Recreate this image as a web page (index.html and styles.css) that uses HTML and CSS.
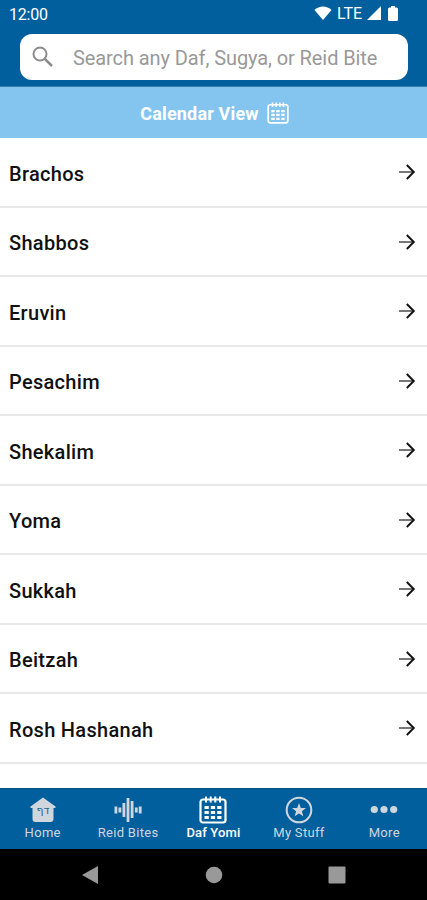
FILE: index.html
```html
<!DOCTYPE html>
<html lang="en">
<head>
  <meta charset="utf-8">
  <meta name="viewport" content="width=device-width, initial-scale=1">
  <title>Daf Yomi</title>
  <link rel="stylesheet" href="styles.css">
</head>
<body>
  <svg class="sprite" width="0" height="0">
    <symbol id="arrow" viewBox="0 0 18 18">
      <path d="M1 9h14" stroke="#777" stroke-width="2"/>
      <path d="M8.800 2l7 7-7 7" fill="none" stroke="#111" stroke-width="1.900"/>
    </symbol>
    <symbol id="calendar" viewBox="0 0 28 28">
      <rect x="1.500" y="3.500" width="25" height="23" rx="2.500" fill="none" stroke="currentColor" stroke-width="2.200"/>
      <path d="M7 .5v6M11.700 .5v6M16.300 .5v6M21 .5v6" stroke="currentColor" stroke-width="2"/>
      <path d="M5.500 11.500h4.300M11.800 11.500h4.300M18.200 11.500h4.300M5.500 16.500h4.300M11.800 16.500h4.300M18.200 16.500h4.300M5.500 21.500h4.300M11.800 21.500h4.300M18.200 21.500h4.300" stroke="currentColor" stroke-width="2.800"/>
    </symbol>
  </svg>
  <div class="app">
    <header class="header">
      <div class="status">
        <span>12:00</span>
        <div class="status-icons">
          <svg width="18" height="14" viewBox="0 0 18 14"><path d="M.5 4C5-.8 13-.8 17.500 4L9 14z" fill="#fff"/></svg>
          <span class="network">LTE</span>
          <svg class="signal" width="14" height="14" viewBox="0 0 14 14"><path d="M14 0v14H0z" fill="#fff"/></svg>
          <svg class="battery" width="10" height="15" viewBox="0 0 10 15"><path d="M3 0h4v1.500h1.500Q10 1.500 10 3v10.500q0 1.500-1.500 1.500h-7Q0 15 0 13.500V3q0-1.500 1.500-1.500H3z" fill="#fff"/></svg>
        </div>
      </div>
      <div class="search">
        <svg width="22" height="22" viewBox="0 0 22 22" fill="none" stroke="#8c8c8c"><circle cx="8" cy="8" r="6.500" stroke-width="2"/><path d="M12.800 12.800l7.200 7.200" stroke-width="2.500"/></svg>
        <span>Search any Daf, Sugya, or Reid Bite</span>
      </div>
    </header>
    <div class="calendar-bar">
      <span>Calendar View</span>
      <svg width="22" height="22"><use href="#calendar"/></svg>
    </div>
    <ul class="list">
      <li><span>Brachos</span><svg width="18" height="18"><use href="#arrow"/></svg></li>
      <li><span>Shabbos</span><svg width="18" height="18"><use href="#arrow"/></svg></li>
      <li><span>Eruvin</span><svg width="18" height="18"><use href="#arrow"/></svg></li>
      <li><span>Pesachim</span><svg width="18" height="18"><use href="#arrow"/></svg></li>
      <li><span>Shekalim</span><svg width="18" height="18"><use href="#arrow"/></svg></li>
      <li><span>Yoma</span><svg width="18" height="18"><use href="#arrow"/></svg></li>
      <li><span>Sukkah</span><svg width="18" height="18"><use href="#arrow"/></svg></li>
      <li><span>Beitzah</span><svg width="18" height="18"><use href="#arrow"/></svg></li>
      <li><span>Rosh Hashanah</span><svg width="18" height="18"><use href="#arrow"/></svg></li>
    </ul>
    <nav class="tabs">
      <div class="tab">
        <svg width="28" height="28" viewBox="0 0 28 28">
          <path d="M14 1.500L26.500 10.500q.8 1.500-1 1.500H24.500V23q0 3-3 3h-15q-3 0-3-3V12H2.500Q.7 12 1.500 10.500z" fill="currentColor"/>
          <text class="logo" x="14" y="18" text-anchor="middle">דף</text>
        </svg>
        <span>Home</span>
      </div>
      <div class="tab">
        <svg width="28" height="28" viewBox="0 0 28 28" stroke="currentColor" stroke-width="2.800">
          <path d="M1.900 10.500v7M5.900 11.500v5M9.900 7v14M14 2v24M18.100 5v17M22.300 11.500v5M26.200 10.500v7"/>
        </svg>
        <span>Reid Bites</span>
      </div>
      <div class="tab active">
        <svg width="28" height="28"><use href="#calendar"/></svg>
        <span>Daf Yomi</span>
      </div>
      <div class="tab">
        <svg width="28" height="28" viewBox="0 0 28 28">
          <circle cx="14" cy="14" r="12.300" fill="none" stroke="currentColor" stroke-width="2"/>
          <path d="M14 7l1.800 4.900 5.200.2-4.100 3.200 1.400 5-4.300-2.900-4.300 2.900 1.400-5L7 12.100l5.200-.2z" fill="currentColor"/>
        </svg>
        <span>My Stuff</span>
      </div>
      <div class="tab">
        <svg width="28" height="28" viewBox="0 0 28 28" fill="currentColor">
          <circle cx="4.300" cy="13.500" r="3.600"/><circle cx="14" cy="13.500" r="3.600"/><circle cx="23.700" cy="13.500" r="3.600"/>
        </svg>
        <span>More</span>
      </div>
    </nav>
    <div class="system">
      <svg width="18" height="20" viewBox="0 0 18 20"><path d="M17 1v18L1 10z" fill="#999"/></svg>
      <svg width="18" height="18" viewBox="0 0 18 18"><circle cx="9" cy="9" r="8.300" fill="#999"/></svg>
      <svg width="18" height="18" viewBox="0 0 18 18"><rect x=".5" y=".5" width="17" height="17" rx="1" fill="#999"/></svg>
    </div>
  </div>
</body>
</html>
```
FILE: styles.css
```css
* {
  box-sizing: border-box;
}
body {
  margin: 0;
  font-family: Roboto, "Liberation Sans", sans-serif;
  background-color: #fff;
}
.sprite {
  display: block;
}
.app {
  height: 900px;
  display: flex;
  flex-direction: column;
  overflow: hidden;
}
.header {
  height: 87px;
  padding: 0 19px 0 20px;
  background-color: #015f9d;
  border-bottom: 1px solid #347fae;
}
.status {
  height: 34px;
  margin: 0 -9px 0 -11px;
  padding-top: 6px;
  display: flex;
  justify-content: space-between;
  color: #fff;
  font-size: 16px;
  line-height: 17px;
  letter-spacing: -0.2px;
}
.status-icons {
  display: flex;
  width: 103px;
}
.network {
  width: 26px;
  margin: -1px 0 0 5px;
  letter-spacing: 0;
}
.signal {
  margin-left: 4px;
}
.battery {
  margin-left: 7px;
}
.search {
  height: 46px;
  padding: 1px 0 0 12px;
  display: flex;
  align-items: center;
  gap: 19px;
  border-radius: 12px;
  background-color: #fff;
  color: #999;
  font-size: 20px;
  letter-spacing: -0.09px;
  white-space: nowrap;
}
.search svg {
  margin-bottom: 1px;
}
.calendar-bar {
  height: 51px;
  padding: 1px 0 0 2px;
  display: flex;
  align-items: center;
  justify-content: center;
  gap: 8px;
  background-color: #83c5ee;
  color: #fff;
  font-size: 18px;
  font-weight: 700;
  letter-spacing: 0.17px;
}
.list {
  margin: 0;
  padding: 0;
  flex: 1;
  list-style: none;
}
.list li {
  height: 69.5px;
  padding: 1px 11px 0 9px;
  display: flex;
  align-items: center;
  justify-content: space-between;
  border-bottom: 2px solid #e8e8e8;
  color: #111;
  font-size: 20px;
  font-weight: 500;
  letter-spacing: 0.3px;
}
.list span {
  padding-top: 3px;
}
.tabs {
  height: 61px;
  padding-top: 7px;
  display: grid;
  grid-template-columns: repeat(5, 1fr);
  background-color: #015f9d;
  border-top: 1px solid #06507f;
}
.tab {
  display: flex;
  flex-direction: column;
  align-items: center;
  color: #d0d6dd;
  font-size: 13px;
  line-height: 17px;
  letter-spacing: 0.3px;
}
.tab.active {
  color: #fff;
}
.tab.active span {
  font-weight: 500;
  letter-spacing: 0.15px;
}
.logo {
  font-family: "DejaVu Sans", sans-serif;
  font-size: 11px;
  font-weight: 400;
  letter-spacing: 0;
  fill: #2b6797;
}
.system {
  height: 51px;
  padding: 0 81px;
  display: flex;
  align-items: center;
  justify-content: space-between;
  background-color: #000;
}
```
